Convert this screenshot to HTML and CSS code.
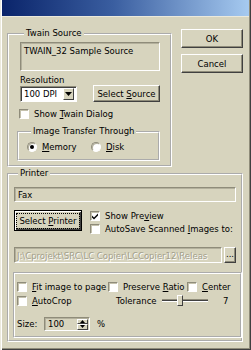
FILE: index.html
```html
<!DOCTYPE html>
<html>
<head>
<meta charset="utf-8">
<link rel="stylesheet" href="styles.css">
</head>
<body>
<div class="win">
  <div class="title"></div>
  <div class="client">
    <div class="top">
      <fieldset class="grp twain">
        <legend>Twain Source</legend>
        <div class="field src">TWAIN_32 Sample Source</div>
        <div class="lbl res">Resolution</div>
        <div class="resrow">
          <div class="combo"><span class="ctext">100 DPI</span><span class="cbtn"><svg width="7" height="4" viewBox="0 0 7 4"><path d="M0 0h7L3.5 4z" fill="#000"/></svg></span></div>
          <div class="btn selsrc"><span>Select <u>S</u>ource</span></div>
        </div>
        <div class="chk showtw"><span class="box"></span><span>Show <u>T</u>wain Dialog</span></div>
        <fieldset class="grp transfer">
          <legend>Image Transfer Through</legend>
          <div class="radios">
            <div class="opt mem"><span class="radio on"></span><span><u>M</u>emory</span></div>
            <div class="opt"><span class="radio"></span><span><u>D</u>isk</span></div>
          </div>
        </fieldset>
      </fieldset>
      <div class="btncol">
        <div class="btn ok">OK</div>
        <div class="btn cancel">Cancel</div>
      </div>
    </div>
    <fieldset class="grp printer">
      <legend>Printer</legend>
      <div class="field fax">Fax</div>
      <div class="prow">
        <div class="btn selprn"><span class="focus">Select <u>P</u>rinter</span></div>
        <div class="chks">
          <div class="chk"><span class="box checked"><svg width="8" height="8" viewBox="0 0 8 8"><path d="M1 3.5l2 2 4-4v2l-4 4-2-2z" fill="#000"/></svg></span><span>Show Pre<u>v</u>iew</span></div>
          <div class="chk"><span class="box"></span><span>AutoSave Scanned <u>I</u>mages to:</span></div>
        </div>
      </div>
      <div class="pathrow">
        <div class="field path">J:\Cprojekt\SRC\LC Copier\LCCopier12\Releas</div>
        <div class="btn dots">...</div>
      </div>
      <div class="panel">
        <div class="row r1">
          <div class="chk fit"><span class="box"></span><span><u>F</u>it image to page</span></div>
          <div class="chk ratio"><span class="box"></span><span>Preserve <u>R</u>atio</span></div>
          <div class="chk"><span class="box"></span><span><u>C</u>enter</span></div>
        </div>
        <div class="row r2">
          <div class="chk crop"><span class="box"></span><span><u>A</u>utoCrop</span></div>
          <span class="tol">Tolerance</span>
          <div class="slider"><span class="track"></span><span class="thumb"></span></div>
          <span class="tolv">7</span>
        </div>
        <div class="row r3">
          <span class="sizel">Size:</span>
          <div class="spin"><span class="stext">100</span><span class="sbtns"><span class="sb"><svg width="5" height="3" viewBox="0 0 5 3"><path d="M0 3h5L2.5 0z" fill="#000"/></svg></span><span class="sb"><svg width="5" height="3" viewBox="0 0 5 3"><path d="M0 0h5L2.5 3z" fill="#000"/></svg></span></span></div>
          <span class="pct">%</span>
        </div>
      </div>
    </fieldset>
  </div>
</div>
</body>
</html>
```
FILE: styles.css
```css
* { box-sizing: border-box; }
html, body { margin: 0; padding: 0; }
body {
  width: 251px;
  height: 350px;
  overflow: hidden;
  background: #d7d4be;
  font-family: "DejaVu Sans", Verdana, sans-serif;
  font-size: 8.5px;
  color: #000;
}
u { text-decoration: underline; text-underline-offset: 1px; }
.win {
  width: 251px;
  height: 350px;
  background: #d7d4be;
  box-shadow: inset 1px 0 #ebe9dc, inset 2px 0 #fff, inset -1px -1px #404040, inset -2px -2px #8f8c7a;
  display: flex;
  flex-direction: column;
}
.title {
  height: 17px;
  margin: 0 2px;
  flex: none;
  background: linear-gradient(to right, #0a246a, #3a5ea0 45%, #a6caf0);
  border-bottom: 1px solid #ebe9dc;
}
.client {
  padding-left: 7px;
  display: flex;
  flex-direction: column;
}
.top {
  display: flex;
  margin-top: 11px;
}
.grp {
  margin: 0;
  min-width: 0;
  border: 2px groove #fff;
  padding: 0;
}
.grp > legend {
  margin-left: 4px;
  padding: 0 2px;
  line-height: 11px;
  height: 11px;
}
.twain {
  width: 165px;
  padding: 3px 10px 4px 11px;
}
.field {
  border: 1px solid;
  border-color: #8f8c7a #fff #fff #8f8c7a;
  box-shadow: inset 1px 1px #b3b09c;
  padding: 2px 3px;
  line-height: 10px;
  white-space: nowrap;
  overflow: hidden;
}
.src { height: 29px; width: 140px; padding-top: 3px; }
.lbl { line-height: 11px; }
.res { margin-top: 4px; }
.resrow {
  margin-top: -1px;
  height: 17px;
  display: flex;
  align-items: center;
  justify-content: space-between;
  width: 140px;
}
.combo {
  width: 57px;
  height: 16px;
  background: #fff;
  border: 1px solid;
  border-color: #8f8c7a #fff #fff #8f8c7a;
  box-shadow: inset 1px 1px #404040;
  display: flex;
  align-items: center;
  padding: 2px 2px 1px 3px;
}
.ctext { flex: 1; line-height: 10px; }
.cbtn {
  width: 11px;
  height: 12px;
  background: #d7d4be;
  border: 1px solid;
  border-color: #fff #404040 #404040 #fff;
  display: flex;
  align-items: center;
  justify-content: center;
}
.btn {
  background: #d7d4be;
  border: 1px solid;
  border-color: #fff #404040 #404040 #fff;
  box-shadow: inset -1px -1px #8f8c7a;
  display: flex;
  align-items: center;
  justify-content: center;
  line-height: 10px;
  white-space: nowrap;
}
.selsrc { width: 67px; height: 17px; }
.chk {
  display: flex;
  align-items: center;
  height: 12px;
  white-space: nowrap;
}
.box {
  width: 10px;
  height: 10px;
  flex: none;
  background: #fff;
  border: 1px solid;
  border-color: #8f8c7a #fff #fff #8f8c7a;
  box-shadow: inset 1px 1px #c4c1ad;
  margin-right: 5px;
  display: flex;
  align-items: center;
  justify-content: center;
}
.showtw { margin-top: 6px; margin-left: -1px; }
.transfer {
  margin: 6px 0 0 -3px;
  width: 143px;
  padding: 4px 4px 7px 8px;
}
.radios { display: flex; height: 11px; align-items: center; }
.opt { display: flex; align-items: center; }
.mem { width: 64px; }
.radio {
  width: 10px;
  height: 10px;
  border-radius: 50%;
  background: #fff;
  border: 1px solid;
  border-color: #8f8c7a #fff #fff #8f8c7a;
  box-shadow: inset 1px 1px #b3b09c;
  margin-right: 5px;
  position: relative;
}
.radio.on::after {
  content: "";
  position: absolute;
  left: 2px;
  top: 2px;
  width: 4px;
  height: 4px;
  border-radius: 50%;
  background: #000;
}
.btncol {
  margin: 1px 0 0 9px;
  display: flex;
  flex-direction: column;
  gap: 6px;
}
.ok, .cancel { width: 62px; height: 19px; }
.printer {
  margin-top: 1px;
  width: 236px;
  padding: 8px 5px 2px 5px;
}
.fax { height: 15px; width: 222px; padding-top: 2px; }
.prow {
  margin-top: 8px;
  display: flex;
  align-items: flex-start;
}
.selprn {
  width: 68px;
  height: 21px;
  border: 1px solid #000;
  box-shadow: inset 1px 1px #fff, inset -1px -1px #404040, inset -2px -2px #8f8c7a;
}
.focus {
  border: 1px dotted #000;
  padding: 2px 2px;
  line-height: 10px;
}
.chks {
  margin-left: 8px;
  display: flex;
  flex-direction: column;
  gap: 1px;
}
.checked svg { display: block; }
.pathrow {
  margin-top: 12px;
  display: flex;
  gap: 2px;
  height: 16px;
}
.path {
  width: 208px;
  height: 16px;
  color: #a3a08c;
  text-shadow: 1px 1px #fff;
  padding: 3px 2px;
}
.dots { width: 12px; height: 16px; padding-bottom: 3px; }
.panel {
  margin: 9px 0 0 -1px;
  width: 229px;
  border: 2px groove #fff;
  padding: 7px 2px 5px 2px;
}
.row { display: flex; align-items: center; }
.r1 { height: 11px; }
.r2 { height: 11px; margin-top: 3px; }
.r3 { height: 14px; margin-top: 11px; }
.fit { width: 91px; }
.ratio { width: 79px; }
.crop { width: 99px; }
.tol { width: 46px; }
.slider { width: 46px; height: 11px; position: relative; }
.track {
  position: absolute;
  left: 0; right: 0; top: 4px;
  height: 3px;
  border-top: 1px solid #8f8c7a;
  border-bottom: 1px solid #fff;
  background: #404040;
  background-clip: content-box;
}
.thumb {
  position: absolute;
  left: 15px;
  top: 0;
  width: 6px;
  height: 11px;
  background: #d7d4be;
  border: 1px solid;
  border-color: #fff #404040 #404040 #fff;
}
.tolv { margin-left: 15px; }
.sizel { width: 27px; }
.spin {
  width: 46px;
  height: 14px;
  border: 1px solid;
  border-color: #8f8c7a #fff #fff #8f8c7a;
  box-shadow: inset 1px 1px #b3b09c;
  display: flex;
  align-items: center;
  padding: 1px 1px 1px 3px;
}
.stext { flex: 1; line-height: 10px; }
.sbtns { display: flex; flex-direction: column; width: 11px; height: 11px; }
.sb {
  flex: 1;
  background: #d7d4be;
  border: 1px solid;
  border-color: #fff #404040 #404040 #fff;
  display: flex;
  align-items: center;
  justify-content: center;
}
.sb svg { display: block; }
.pct { margin-left: 7px; }
```
